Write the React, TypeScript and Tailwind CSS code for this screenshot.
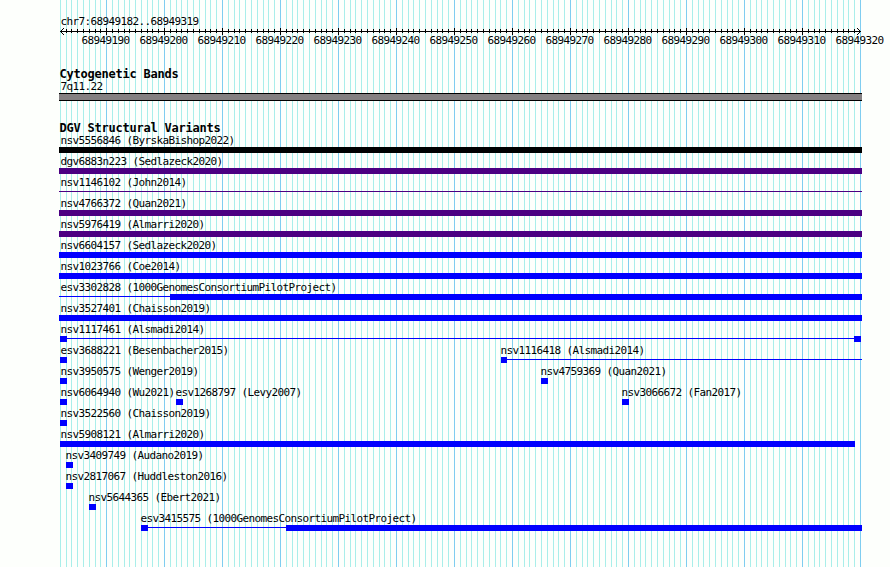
import React from 'react';

interface Segment {
  width: number;
  kind: 'bar' | 'line';
}

interface Feature {
  label: string;
  start: number;
  color: string;
  segments: Segment[];
}

const LEFT = 59;
const RIGHT = 862;
const BASE_WIDTH = 5.799;

const bar = (width: number): Segment => ({ width, kind: 'bar' });
const line = (width: number): Segment => ({ width, kind: 'line' });

const feature = (label: string, start: number, segments: Segment[], color = 'bg-[#0000ff]'): Feature => ({
  label,
  start,
  color,
  segments,
});

const full = [bar(RIGHT - LEFT)];

const rows: Feature[][] = [
  [feature('nsv5556846 (ByrskaBishop2022)', 59, full, 'bg-black')],
  [feature('dgv6883n223 (Sedlazeck2020)', 59, full, 'bg-[#4b0082]')],
  [feature('nsv1146102 (John2014)', 59, [line(803)], 'bg-[#4b0082]')],
  [feature('nsv4766372 (Quan2021)', 59, full, 'bg-[#4b0082]')],
  [feature('nsv5976419 (Almarri2020)', 59, full, 'bg-[#4b0082]')],
  [feature('nsv6604157 (Sedlazeck2020)', 59, full)],
  [feature('nsv1023766 (Coe2014)', 59, full)],
  [feature('esv3302828 (1000GenomesConsortiumPilotProject)', 59, [line(111), bar(692)])],
  [feature('nsv3527401 (Chaisson2019)', 59, full)],
  [feature('nsv1117461 (Alsmadi2014)', 60, [bar(7), line(787), bar(7)])],
  [
    feature('esv3688221 (Besenbacher2015)', 60, [bar(7)]),
    feature('nsv1116418 (Alsmadi2014)', 501, [bar(6), line(355)]),
  ],
  [
    feature('nsv3950575 (Wenger2019)', 60, [bar(7)]),
    feature('nsv4759369 (Quan2021)', 541, [bar(7)]),
  ],
  [
    feature('nsv6064940 (Wu2021)', 60, [bar(7)]),
    feature('esv1268797 (Levy2007)', 176, [bar(7)]),
    feature('nsv3066672 (Fan2017)', 622, [bar(7)]),
  ],
  [feature('nsv3522560 (Chaisson2019)', 60, [bar(7)])],
  [feature('nsv5908121 (Almarri2020)', 60, [bar(795)])],
  [feature('nsv3409749 (Audano2019)', 66, [bar(7)])],
  [feature('nsv2817067 (Huddleston2016)', 66, [bar(7)])],
  [feature('nsv5644365 (Ebert2021)', 89, [bar(7)])],
  [feature('esv3415575 (1000GenomesConsortiumPilotProject)', 141, [bar(7), line(138), bar(576)])],
];

// one tick per base, a major one every tenth
const ticks = Array.from({ length: 139 }, (_, i) => ({
  x: Math.floor(60.211 + i * BASE_WIDTH),
  major: (i + 2) % 10 === 0,
}));

const featureWidth = (f: Feature) => f.segments.reduce((sum, s) => sum + s.width, 0);

const labelOffset = (start: number) => {
  if (start === LEFT) return 'ml-[1.4px]';
  return start > 60 ? '-ml-[0.6px]' : 'ml-[0.4px]';
};

const GridLines: React.FC = () => (
  <svg className="absolute inset-0 -z-10" width="890" height="567" shapeRendering="crispEdges">
    {ticks.map(({ x, major }) => (
      <rect key={x} x={x} y={0} width={1} height={567} fill={major ? '#7fcdf0' : '#a9eeea'} />
    ))}
  </svg>
);

const Ruler: React.FC = () => (
  <svg className="block" width="890" height="7" shapeRendering="crispEdges">
    <rect x={60} y={3} width={801} height={1} />
    {ticks.slice(1, -1).map(({ x, major }) => (
      <rect key={x} x={x} y={major ? 0 : 1} width={1} height={major ? 7 : 4} />
    ))}
    <path d="M61 2h1v1h-1zM62 1h1v1h-1zM63 0h1v1h-1zM61 4h1v1h-1zM62 5h1v1h-1zM63 6h1v1h-1z" />
    <path d="M859 2h1v1h-1zM858 1h1v1h-1zM857 0h1v1h-1zM859 4h1v1h-1zM858 5h1v1h-1zM857 6h1v1h-1z" />
  </svg>
);

const TrackTitle: React.FC<{ children: React.ReactNode }> = ({ children }) => (
  <h2 className="pl-[59.5px] h-[13px] text-[12px] leading-[13px] font-bold tracking-[-0.224px]">{children}</h2>
);

const FeatureRow: React.FC<{ features: Feature[] }> = ({ features }) => (
  <div className="flex h-[21px]">
    {features.map((f, i) => {
      const prev = features[i - 1];
      const prevEnd = prev ? prev.start + featureWidth(prev) : 0;
      return (
        <div
          key={f.label}
          className="shrink-0"
          style={{ marginLeft: f.start - prevEnd, width: featureWidth(f) }}
        >
          <p className={`h-[13px] ${labelOffset(f.start)}`}>{f.label}</p>
          <div className="flex">
            {f.segments.map((s, n) => (
              <div
                key={n}
                className={`${f.color} ${s.kind === 'bar' ? 'h-[6px]' : 'mt-[2px] h-px'}`}
                style={{ width: s.width }}
              />
            ))}
          </div>
        </div>
      );
    })}
  </div>
);

const App: React.FC = () => {
  const positions = Array.from({ length: 14 }, (_, i) => 68949190 + i * 10);

  return (
    <div className="relative isolate w-[890px] h-[567px] overflow-hidden bg-[#fdfffc] text-black whitespace-nowrap text-[11px] leading-[13px] tracking-[-0.622px] font-['DejaVu_Sans_Mono',monospace]">
      <GridLines />
      <header className="pt-[15px] h-[68px]">
        <p className="pl-[60.4px] h-[13px]">chr7:68949182..68949319</p>
        <Ruler />
        <div className="flex pl-[76px] -mt-px">
          {positions.map((p) => (
            <span key={p} className="w-[58px] shrink-0 pl-[5.4px]">{p}</span>
          ))}
        </div>
      </header>

      <section className="h-[54px]">
        <TrackTitle>Cytogenetic Bands</TrackTitle>
        <p className="-mt-px pl-[60.4px] h-[13px]">7q11.22</p>
        <div className="ml-[59px] w-[803px] h-[8px] border-y border-black bg-[#848082]" />
      </section>

      <section>
        <TrackTitle>DGV Structural Variants</TrackTitle>
        <div className="-mt-px">
          {rows.map((features) => (
            <FeatureRow key={features[0].label} features={features} />
          ))}
        </div>
      </section>
    </div>
  );
};

export default App;
